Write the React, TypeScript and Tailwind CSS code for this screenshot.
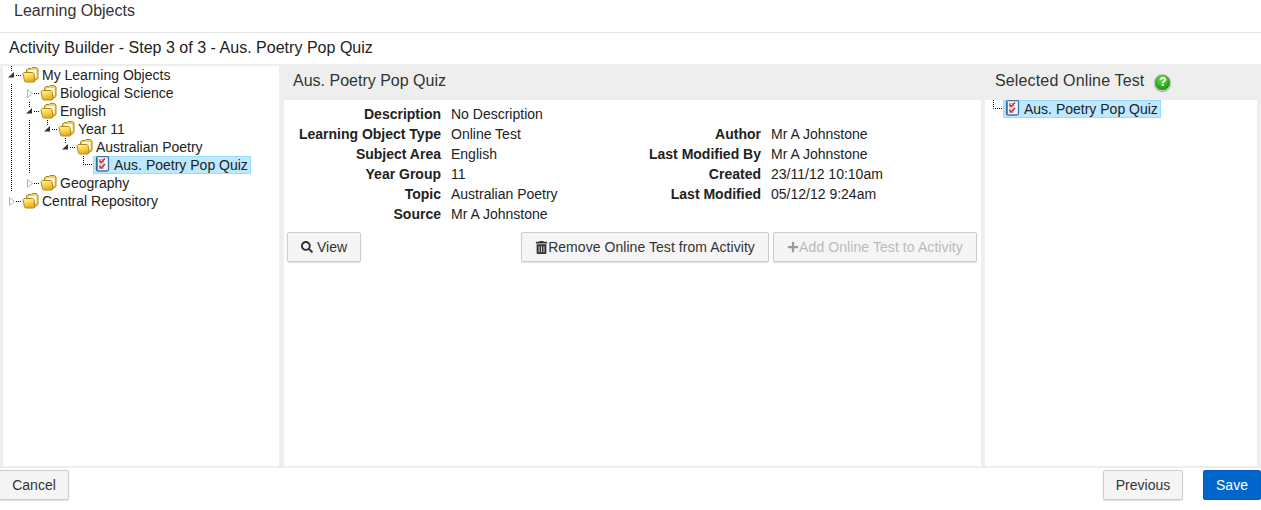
import { FaPlus, FaSearch, FaTrashAlt } from "react-icons/fa";

type Cell = "pipe" | "blank" | "open" | "closed" | "leaf";

type Node = {
  label: string;
  cells: Cell[];
  selected?: boolean;
};

const nodes: Node[] = [
  { label: "My Learning Objects", cells: ["open"] },
  { label: "Biological Science", cells: ["pipe", "closed"] },
  { label: "English", cells: ["pipe", "open"] },
  { label: "Year 11", cells: ["pipe", "pipe", "open"] },
  { label: "Australian Poetry", cells: ["pipe", "pipe", "blank", "open"] },
  { label: "Aus. Poetry Pop Quiz", cells: ["pipe", "pipe", "blank", "blank", "leaf"], selected: true },
  { label: "Geography", cells: ["pipe", "closed"] },
  { label: "Central Repository", cells: ["closed"] },
];

const leftDetails = [
  ["Description", "No Description"],
  ["Learning Object Type", "Online Test"],
  ["Subject Area", "English"],
  ["Year Group", "11"],
  ["Topic", "Australian Poetry"],
  ["Source", "Mr A Johnstone"],
];

const rightDetails = [
  ["Author", "Mr A Johnstone"],
  ["Last Modified By", "Mr A Johnstone"],
  ["Created", "23/11/12 10:10am"],
  ["Last Modified", "05/12/12 9:24am"],
];

function TreeCell({ kind }: { kind: Cell }) {
  const dots = { stroke: "#000", strokeWidth: 1, strokeDasharray: "1 1" };
  return (
    <svg width="18" height="18" viewBox="0 0 18 18" className="shrink-0">
      {kind === "pipe" && <path d="M8.5 0V18" {...dots} />}
      {kind === "leaf" && <path d="M8.5 0V8.5H18" fill="none" {...dots} />}
      {kind === "open" && (
        <>
          <path d="M8.5 0V5" {...dots} />
          <path d="M5 11.5 11 6V11.5Z" fill="#333" />
          <path d="M13 9.5H18" {...dots} />
        </>
      )}
      {kind === "closed" && (
        <>
          <path d="M6.5 5.5 11.5 9.5 6.5 13.5Z" fill="#fff" stroke="#b5b5b5" />
          <path d="M13 9.5H18" {...dots} />
        </>
      )}
    </svg>
  );
}

function FolderIcon() {
  return (
    <svg width="18" height="18" viewBox="0 0 18 18" className="shrink-0">
      <defs>
        <linearGradient id="folderFront" x1="0" y1="0" x2="0.3" y2="1">
          <stop offset="0" stopColor="#fff3b0" />
          <stop offset="0.5" stopColor="#fbd84f" />
          <stop offset="1" stopColor="#e8ad1c" />
        </linearGradient>
      </defs>
      <path d="M5.5 6.5V4L7 2.5H10L11 1.5H15.5L17 3V12.5L14 14.5Z" fill="#f6cf50" stroke="#a9862a" />
      <path d="M7 6 8 4H15.5V11H13Z" fill="#fffbe6" />
      <path d="M2 7.5 3 6.5H12L13 7.5 14 15 13 16H4.5L3.5 15Z" fill="url(#folderFront)" stroke="#ad8a22" />
    </svg>
  );
}

function TestIcon() {
  return (
    <svg width="18" height="18" viewBox="0 0 18 18" className="shrink-0">
      <rect x="3.5" y="0.5" width="12" height="14.5" rx="1.5" fill="#f3f6fa" stroke="#3f76b2" strokeWidth="1.3" />
      <path d="M4 2V14.5" stroke="#2f66a6" strokeWidth="1.4" />
      <rect x="6.5" y="3.5" width="4" height="3.5" fill="#fff" stroke="#9a9a9a" strokeWidth="0.7" />
      <rect x="6.5" y="9" width="4" height="3.5" fill="#fff" stroke="#9a9a9a" strokeWidth="0.7" />
      <path d="M6.5 4.5 8.2 6.5 12 2.5" fill="none" stroke="#d0282a" strokeWidth="1.5" />
      <path d="M6.5 10 8.2 12 12 8" fill="none" stroke="#d0282a" strokeWidth="1.5" />
    </svg>
  );
}

function HelpIcon() {
  return (
    <span className="mt-[2px] flex h-[17px] w-[17px] items-center justify-center rounded-full border border-[#b9c4b6] bg-[radial-gradient(circle_at_45%_30%,#74dc4c,#1c9a0e_72%)] text-[12px] leading-none font-bold text-white shadow-[0_1px_1px_rgba(0,0,0,0.35)]">
      ?
    </span>
  );
}

function TreeRow({ node }: { node: Node }) {
  return (
    <div className="flex h-[18px] items-center whitespace-nowrap">
      {node.cells.map((c, i) => (
        <TreeCell key={i} kind={c} />
      ))}
      <div
        className={
          node.selected
            ? "flex h-[18px] items-center border border-[#9bdcfb] bg-[#bde8ff] pr-[2px]"
            : "flex h-[18px] items-center"
        }
      >
        {node.selected ? (
          <span className="-ml-px">
            <TestIcon />
          </span>
        ) : (
          <FolderIcon />
        )}
        <span className="pl-[3px] leading-[18px]">{node.label}</span>
      </div>
    </div>
  );
}

function DetailColumn({ rows, className }: { rows: string[][]; className: string }) {
  return (
    <div className={className}>
      {rows.map(([label, value]) => (
        <div key={label} className="flex h-5 items-center">
          <span className="w-[157px] shrink-0 text-right font-bold">{label}</span>
          <span className="pl-[10px]">{value}</span>
        </div>
      ))}
    </div>
  );
}

const buttonClass =
  "flex h-[30px] items-center justify-center rounded-[2px] border border-[#ccc] bg-[#f5f5f5] text-[14px] text-[#333] shadow-[0_1px_1px_rgba(0,0,0,0.12)]";

export default function App() {
  return (
    <div className="h-[510px] w-[1261px] overflow-hidden bg-white font-['Liberation_Sans',Arial,sans-serif] text-[14px] text-[#222]">
      <div className="h-[33px] border-b border-[#e5e5e5] pl-[14px] text-[16px] leading-[22px] text-[#333]">
        Learning Objects
      </div>
      <div className="flex h-[31px] items-center pb-[2px] pl-[9px] text-[16px] tracking-[0.02px]">
        Activity Builder - Step 3 of 3 - Aus. Poetry Pop Quiz
      </div>

      <div className="flex h-[404px] bg-[#eee] pt-[2px] pr-[4px] pb-[2px] pl-[3px]">
        <div className="w-[276px] shrink-0 bg-white">
          {nodes.map((n) => (
            <TreeRow key={n.label} node={n} />
          ))}
        </div>

        <div className="ml-[5px] flex w-[697px] shrink-0 flex-col">
          <div className="flex h-[34px] shrink-0 items-center pb-[4px] pl-[9px] text-[16px] text-[#333]">
            Aus. Poetry Pop Quiz
          </div>
          <div className="flex-1 bg-white pt-[4px]">
            <div className="flex">
              <DetailColumn rows={leftDetails} className="w-[320px] shrink-0" />
              <DetailColumn rows={rightDetails} className="pt-5" />
            </div>
            <div className="mt-[8px] flex pr-[4px] pl-[3px]">
              <button className={`${buttonClass} w-[74px] gap-[4px]`}>
                <FaSearch size={12} />
                View
              </button>
              <button className={`${buttonClass} ml-auto w-[248px] tracking-[0.05px]`}>
                <FaTrashAlt size={13} />
                Remove Online Test from Activity
              </button>
              <button className={`${buttonClass} ml-[4px] w-[204px] bg-[#ececec] tracking-[0.08px] text-[#bbb]`}>
                <FaPlus size={12} className="text-[#999]" />
                Add Online Test to Activity
              </button>
            </div>
          </div>
        </div>

        <div className="ml-[4px] flex w-[272px] shrink-0 flex-col">
          <div className="flex h-[34px] shrink-0 items-center gap-[10px] pb-[4px] pl-[10px] text-[16px] tracking-[0.15px] text-[#333]">
            Selected Online Test
            <HelpIcon />
          </div>
          <div className="flex-1 bg-white">
            <TreeRow node={{ label: "Aus. Poetry Pop Quiz", cells: ["leaf"], selected: true }} />
          </div>
        </div>
      </div>

      <div className="flex items-start pt-[2px]">
        <button className={`${buttonClass} -ml-px w-[70px]`}>Cancel</button>
        <button className={`${buttonClass} ml-auto w-[80px]`}>Previous</button>
        <button className="ml-[20px] flex h-[30px] w-[58px] items-center justify-center rounded-[2px] border border-[#0060bf] bg-[#0066cc] text-[14px] text-white">
          Save
        </button>
      </div>
    </div>
  );
}
